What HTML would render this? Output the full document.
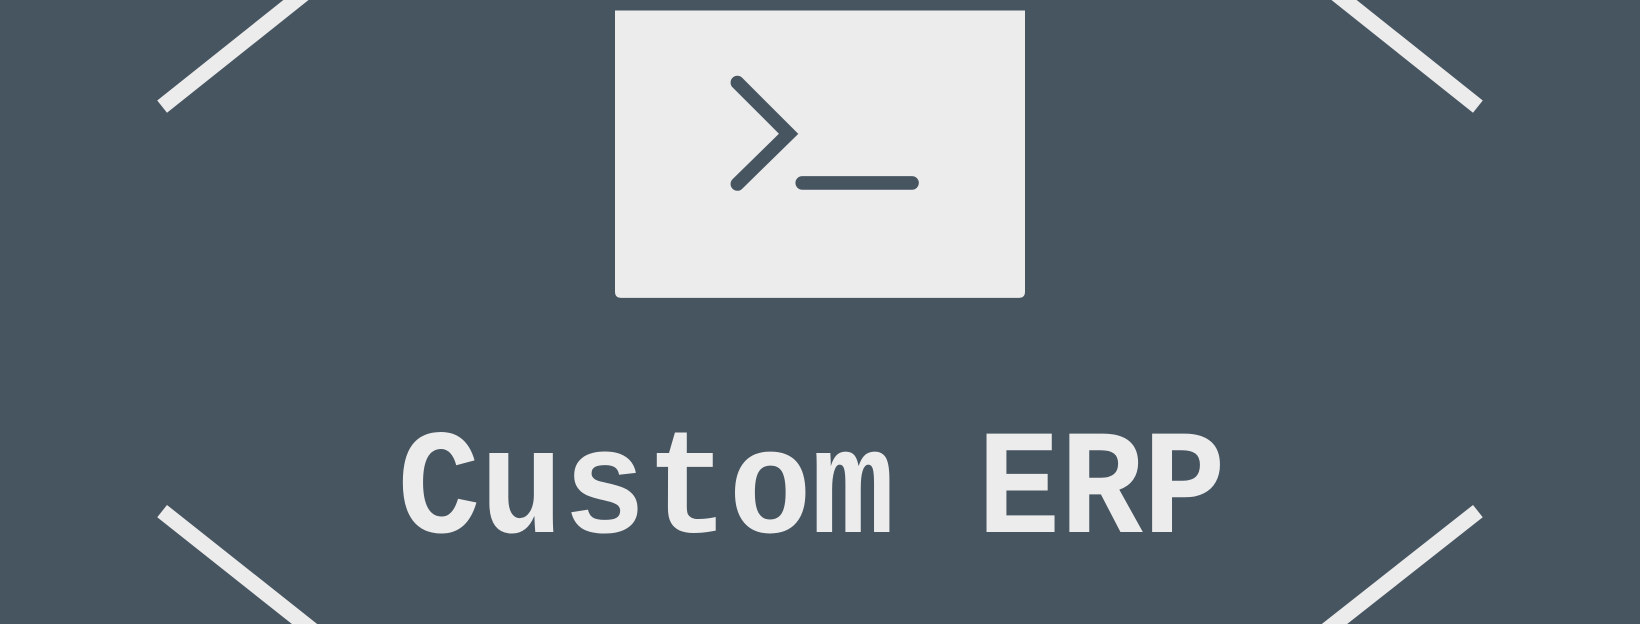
<!DOCTYPE html>
<html><head><meta charset="utf-8"><style>
html,body{margin:0;padding:0;background:#475561;overflow:hidden}
svg{display:block}
</style></head><body>
<svg width="1640" height="624" viewBox="0 0 1568 597" preserveAspectRatio="none" xmlns="http://www.w3.org/2000/svg">
<rect width="1568" height="597" fill="#475561"/>
<g stroke="#ececec" stroke-width="15" fill="none">
<line x1="155" y1="102" x2="293" y2="-8"/>
<line x1="1275" y1="-8" x2="1413" y2="102"/>
<line x1="155" y1="489" x2="300" y2="604"/>
<line x1="1413" y1="489" x2="1267" y2="604"/>
</g>
<path d="M588 10 H980 V279 Q980 285 974 285 H594 Q588 285 588 279 Z" fill="#ececec"/>
<g stroke="#475561" stroke-width="13" stroke-linecap="round" fill="none">
<polyline points="705,79 754,128 705,176"/>
<line x1="767" y1="175" x2="872" y2="175"/>
</g>
<text x="380" y="509" textLength="792" lengthAdjust="spacingAndGlyphs" font-family="Liberation Mono, monospace" font-weight="bold" font-size="143" fill="#ececec">Custom ERP</text>
</svg>
</body></html>
